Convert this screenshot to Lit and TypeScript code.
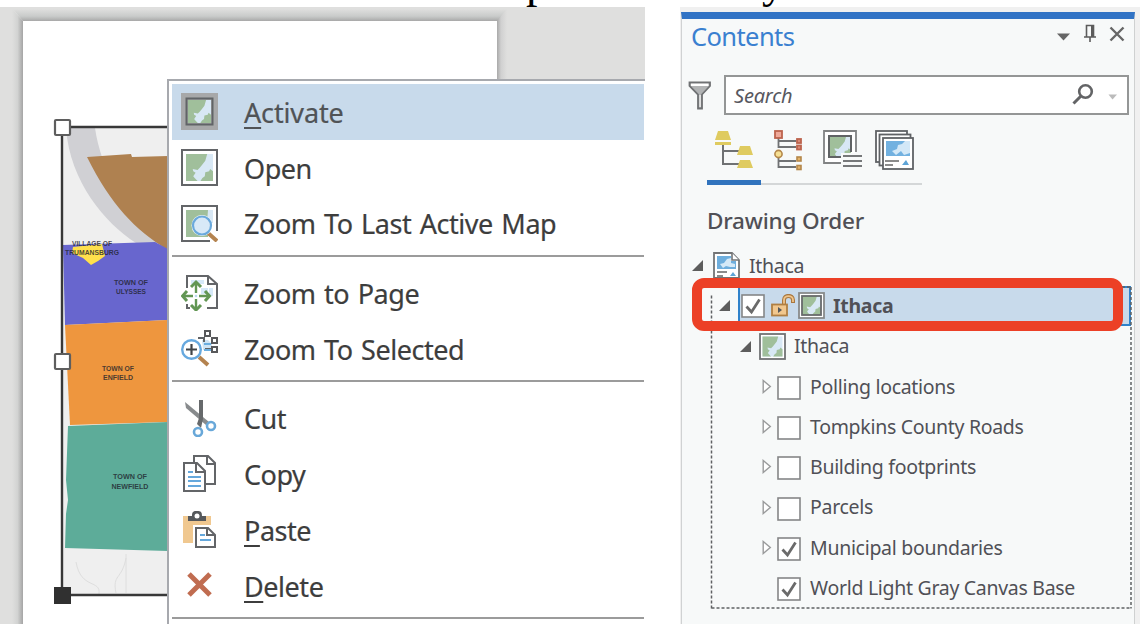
import { LitElement, html, svg, css, nothing } from "lit";
import { customElement } from "lit/decorators.js";

const mapLand = (x: number, y: number, s: number) => svg`
  <g transform="translate(${x} ${y}) scale(${s / 28})">
    <rect width="28" height="28" fill="#d8e8f5"></rect>
    <path d="M0 0H22L20 7L17 11L14.500 14L12 16.500L7 15.500L7.500 18L10 19.500L7.500 23L9 25L12 28H0Z" fill="#a0bf9b"></path>
    <path d="M28 18L25 15.500L24 18L20 19L19.500 23L17 25L15 28H28Z" fill="#a0bf9b"></path>
  </g>`;

const menuIcons: Record<string, unknown> = {
  activate: svg`<rect width="37" height="37" fill="#a7a8a9"></rect><rect x="5.5" y="5.5" width="26" height="26" fill="#a7a8a9" stroke="#616467" stroke-width="2"></rect>${mapLand(7, 7, 23)}`,
  open: svg`<rect x="1" y="1" width="35" height="35" fill="#fff" stroke="#636568" stroke-width="2"></rect>${mapLand(5, 5, 27)}`,
  zoomLast: svg`<path d="M29 36H1V1H36V26" fill="#fff" stroke="#636568" stroke-width="2"></path><rect x="5" y="5" width="22" height="27" fill="#a0bf9b"></rect><path d="M27 5H32V18H26Z" fill="#d8e8f5"></path><path d="M27 28L36 36" stroke="#b4834f" stroke-width="4"></path><circle cx="21" cy="20.5" r="10.500" fill="#fff"></circle><circle cx="21" cy="20.5" r="9" fill="#d8e9f7" stroke="#6aa9dc" stroke-width="2.2"></circle>`,
  zoomPage: svg`<path d="M6 14V2H27L36 10V34H26M9 34H6V30M27 2V10H36" fill="none" stroke="#636568" stroke-width="2"></path><path d="M10 6H23V10H10ZM28 14H32V22H28ZM20 14H27V20H20Z" fill="#d6e9f8"></path><path d="M15 9V35M2 22H29" stroke="#629653" stroke-width="2.4"></path><path d="M10 13L15 8L20 13M10 31L15 36L20 31M6 17L1.500 22L6 27M24 17L28.500 22L24 27" fill="none" stroke="#629653" stroke-width="3"></path><rect x="12" y="19" width="6" height="6" fill="#fff"></rect><circle cx="15" cy="22" r="1.300" fill="#b9d8ef"></circle>`,
  zoomSelected: svg`<path d="M21 10H27L31 14V20H22Z" fill="#cfe4f5"></path><path d="M17 8H23V12M24 19H31" stroke="#616467" stroke-width="2" fill="none"></path><path d="M23 14H30M23 20H31" stroke="#6aaee0" stroke-width="2"></path><g fill="#fff" stroke="#58595b" stroke-width="2"><rect x="24" y="1" width="5" height="5"></rect><rect x="31" y="8" width="5" height="5"></rect><rect x="31" y="17" width="5" height="5"></rect></g><path d="M18 27L27 35" stroke="#b4834f" stroke-width="4"></path><circle cx="10.500" cy="19.500" r="9.300" fill="#fff" stroke="#67a9df" stroke-width="2.400"></circle><path d="M10.500 14V25M5 19.500H16" stroke="#414447" stroke-width="2.200"></path>`,
  cut: svg`<path d="M4 2L5 8L25 25L28 22Z" fill="#888b8d"></path><path d="M18 0H22V19L20 28L16 24L18 18Z" fill="#66696b"></path><circle cx="17" cy="32" r="4" fill="#fff" stroke="#69a8d9" stroke-width="2.600"></circle><circle cx="30" cy="26" r="4" fill="#fff" stroke="#69a8d9" stroke-width="2.600"></circle>`,
  copy: svg`<path d="M13 7V1H27L34 8V29H25M26 1V9H34" fill="#fff" stroke="#636568" stroke-width="2"></path><path d="M3 8H16L24 16V36H3ZM15 8V17H24" fill="#fff" stroke="#636568" stroke-width="2"></path><path d="M7 17H12M7 22H20M7 26H20M7 31H20" stroke="#65a8dc" stroke-width="2"></path>`,
  paste: svg`<path d="M2 5H7V9H25V5H30V14H12V32H2Z" fill="#f0c890"></path><path d="M7 5H11C11 0 13 0 16 0C20 0 21 1 21 5H25V10H7Z" fill="#55585b"></path><circle cx="16" cy="5" r="2.500" fill="#fff"></circle><path d="M15 17H27L34 24V36H15ZM26 17V24H34" fill="#fff" stroke="#636568" stroke-width="2"></path><path d="M19 24H24M19 29H30" stroke="#65a8dc" stroke-width="2"></path>`,
  delete: svg`<path d="M8 7L29 28M29 7L8 28" stroke="#c06c50" stroke-width="5"></path>`,
};

const menu = [
  [["activate", "A", "ctivate"], ["open", "", "Open"], ["zoomLast", "", "Zoom To Last Active Map"]],
  [["zoomPage", "", "Zoom to Page"], ["zoomSelected", "", "Zoom To Selected"]],
  [["cut", "", "Cut"], ["copy", "", "Copy"], ["paste", "P", "aste"], ["delete", "D", "elete"]],
];

const layers = [
  { name: "Polling locations", on: false, group: true },
  { name: "Tompkins County Roads", on: false, group: true },
  { name: "Building footprints", on: false, group: true },
  { name: "Parcels", on: false, group: true },
  { name: "Municipal boundaries", on: true, group: true },
  { name: "World Light Gray Canvas Base", on: true, group: false },
];

const check = (on: boolean) => html`<svg class="check" width="24" height="24" viewBox="0 0 24 24">
  <rect x="1" y="1" width="22" height="22" fill="#fff" stroke="#858687" stroke-width="1.600"></rect>
  ${on ? svg`<path d="M5.500 12.500L10.500 18L18.500 5.500" fill="none" stroke="#6a6a6a" stroke-width="2.800"></path>` : nothing}
</svg>`;

const openArrow = html`<svg width="11" height="11" viewBox="0 0 11 11"><path d="M0 11L11 0V11Z" fill="#5d5d5d"></path></svg>`;
const closedArrow = html`<svg width="10" height="15" viewBox="0 0 10 15"><path d="M1.200 1.500V13.500L8.300 7.500Z" fill="#fff" stroke="#9a9b9c" stroke-width="1.400"></path></svg>`;

@customElement("layout-canvas")
export class LayoutCanvas extends LitElement {
  static styles = css`
    :host { display: block; position: relative; overflow: hidden; background: #dfdfde; }
    .backdrop { display: block; }
    .menu {
      position: absolute; left: 167px; top: 72px; width: 478px; height: 560px; box-sizing: border-box;
      border: 2px solid #a7a9ae; border-right: 0; background: #fff; padding: 3px 1px 0 3px;
      font: 27px/1 "Noto Sans", "Open Sans", sans-serif; color: #3d3d3d; letter-spacing: -0.45px; word-spacing: 1.900px;
    }
    .item { display: flex; align-items: center; height: 55.700px; gap: 26px; padding-left: 9px; white-space: nowrap; }
    .item.hot { background: #c8daeb; color: #505356; letter-spacing: -0.15px; }
    .item svg { flex: none; }
    .label { position: relative; top: 0.700px; -webkit-text-stroke: 0.2px currentColor; }
    .key { text-decoration: underline; text-decoration-thickness: 2px; text-underline-offset: 4px; }
    .group + .group { border-top: 2px solid #9b9b9b; margin-top: 4px; padding-top: 8px; }
    .end { border-top: 2px solid #9b9b9b; margin-top: 4px; }
  `;
  render() {
    return html`
      <svg class="backdrop" width="645" height="617" viewBox="0 7 645 617">
        <defs>
          <linearGradient id="l"><stop offset="0" stop-color="#dfdfde"></stop><stop offset=".5" stop-color="#d2d3d2"></stop><stop offset="1" stop-color="#a5a5a5"></stop></linearGradient>
          <linearGradient id="r"><stop offset="0" stop-color="#a9a9a9"></stop><stop offset=".4" stop-color="#d0d0d0"></stop><stop offset="1" stop-color="#dfdfde"></stop></linearGradient>
          <linearGradient id="t" x2="0" y2="1"><stop offset="0" stop-color="#dfdfde"></stop><stop offset=".6" stop-color="#c9cbca"></stop><stop offset="1" stop-color="#a8a8a8"></stop></linearGradient>
          <clipPath id="frame"><rect x="63" y="128" width="105" height="467"></rect></clipPath>
        </defs>
        <path d="M13 9H507L498 21H23Z" fill="url(#t)"></path>
        <path d="M12 9L23 21V624H12Z" fill="url(#l)"></path>
        <path d="M497 21L507 9V624H497Z" fill="url(#r)"></path>
        <rect x="23" y="21" width="474" height="603" fill="#fff"></rect>
        <g clip-path="url(#frame)">
          <rect x="63" y="128" width="105" height="467" fill="#efefef"></rect>
          <path d="M66 128H95C101 170 126 214 158 243H136C105 223 70 182 66 128Z" fill="#d0d0d4"></path>
          <path d="M87 157L131 154L132 157L168 156V250C135 230 111 205 87 157Z" fill="#af8150"></path>
          <path d="M63 245L155 242L168 249V320L65 325Z" fill="#6866ce"></path>
          <path d="M65 325L167 320V422L70 425Z" fill="#ee963e"></path>
          <path d="M68 426L168 422V551L65 548L66 514L68 500L66 480Z" fill="#5dac99"></path>
          <path d="M73 247L102 244L105 256L98 261L91 265L83 258L72 253Z" fill="#ffe04c"></path>
          <path d="M76 562C81 590 101 579 99 594M126 554V593M126 558C122 580 112 574 116 593" fill="none" stroke="#dedede"></path>
          <g font-family="Liberation Sans" font-size="7" font-weight="700" fill="#20222b" fill-opacity=".8" text-anchor="middle">
            <text x="92" y="246" textLength="40" lengthAdjust="spacingAndGlyphs">VILLAGE OF</text><text x="92" y="255" textLength="54" lengthAdjust="spacingAndGlyphs">TRUMANSBURG</text>
            <text x="131" y="285" textLength="34" lengthAdjust="spacingAndGlyphs">TOWN OF</text><text x="131" y="294" textLength="30" lengthAdjust="spacingAndGlyphs">ULYSSES</text>
            <text x="118" y="371" textLength="32" lengthAdjust="spacingAndGlyphs">TOWN OF</text><text x="118" y="380" textLength="30" lengthAdjust="spacingAndGlyphs">ENFIELD</text>
            <text x="130" y="479" textLength="34" lengthAdjust="spacingAndGlyphs">TOWN OF</text><text x="130" y="489" textLength="37" lengthAdjust="spacingAndGlyphs">NEWFIELD</text>
          </g>
        </g>
        <path d="M168 127H62V595H168" fill="none" stroke="#383838" stroke-width="2.400"></path>
        <g fill="#fff" stroke="#5e5e5e" stroke-width="2.200"><rect x="55" y="120" width="15" height="15" rx="1"></rect><rect x="55" y="354" width="15" height="15" rx="1"></rect></g>
        <rect x="54" y="587" width="17" height="17" fill="#303030"></rect>
      </svg>
      <div class="menu">
        ${menu.map((g) => html`<div class="group">${g.map(([icon, key, text]) => html`
          <div class="item ${icon === "activate" ? "hot" : ""}">
            <svg width="37" height="37" viewBox="0 0 37 37">${menuIcons[icon]}</svg>
            <span class="label"><span class="key">${key}</span>${text}</span>
          </div>`)}</div>`)}
        <div class="end"></div>
      </div>`;
  }
}

@customElement("contents-pane")
export class ContentsPane extends LitElement {
  static styles = css`
    :host { display: block; position: relative; box-sizing: border-box; background: #f0f0f0; padding: 5px 5px 0 1px;
      font: 19.500px/1 "Noto Sans", "Open Sans", sans-serif; color: #505056; }
    .pane { box-sizing: border-box; height: 612px; background: #f7f9f9; border-top: 7px solid #3173c5; border-left: 1px solid #d0d2d3; border-right: 1px solid #cfd1d1; }
    svg { display: block; flex: none; }
    .head { display: flex; align-items: center; height: 37px; padding: 0 5px 1px 9px; }
    .head svg { margin-bottom: 8px; }
    .title { flex: 1; color: #3a80d0; font-size: 25.500px; letter-spacing: -0.6px; padding-bottom: 1px; }
    .find { display: flex; align-items: center; padding: 18px 5px 0 6px; gap: 12px; }
    .box { flex: 1; display: flex; align-items: center; box-sizing: border-box; height: 40px; border: 2px solid #949696; background: #fff; padding: 0 9px 0 8px; }
    .hint { flex: 1; font-style: italic; font-size: 20px; letter-spacing: -0.2px; color: #58585f; padding-top: 1px; }
    .tabs { display: block; margin: 11px 0 0 25px; }
    .order { padding: 20px 0 0 25px; font-size: 22.500px; height: 30px; line-height: 30px; font-weight: 500; letter-spacing: -0.2px; }
    .tree { display: grid; grid-auto-rows: 40.300px; margin-top: 9.300px; }
    .row { display: flex; align-items: center; white-space: nowrap; letter-spacing: -0.3px; }
    .root { padding-left: 10px; gap: 9.500px; }
    .frame { padding-left: 37px; position: relative; }
    .sel { flex: 1; height: 40px; box-sizing: border-box; margin: 0 3px 0 8px; border: 2px solid #2f82cb; background: #c8daeb; display: flex; align-items: center; font-weight: 700; padding-left: 1px; }
    .lock { margin: 0 3px 0 6px; }
    .sel .name { margin-left: 8px; }
    .map { padding-left: 58px; }
    .map .icon { margin: 0 8px; }
    .layer { padding-left: 80px; }
    .arrow { width: 15px; }
    .check { margin-right: 9px; position: relative; top: 1.500px; }
    .sel .check { margin: 0; top: 0; }
    .dots { position: absolute; left: 30px; top: 279px; }
    .mark { position: absolute; left: 12px; top: 271px; width: 431px; height: 53px; box-sizing: border-box; border: 10px solid #ec4026; border-radius: 12px; }
  `;
  render() {
    return html`
      <div class="pane">
        <div class="head">
          <span class="title">Contents</span>
          <svg width="72" height="20" viewBox="0 0 72 20">
            <path d="M0 9.500H13L6.500 16.500Z" fill="#666"></path>
            <path d="M27 13H39M33 13V18M29.500 13V1.500H36.500V13" fill="none" stroke="#5c5c5c" stroke-width="1.600"></path><rect x="34" y="1" width="3" height="12" fill="#5c5c5c"></rect>
            <path d="M53.500 3.500L66.500 16.500M66.500 3.500L53.500 16.500" stroke="#666" stroke-width="2.400"></path>
          </svg>
        </div>
        <div class="find">
          <svg width="24" height="29" viewBox="0 0 24 29"><path d="M1.500 1.500H22V5L14 13.500V27.500H10V13.500L1.500 5Z" fill="#b1b3b4" stroke="#6f7173" stroke-width="1.800"></path><rect x="3" y="2.600" width="17.500" height="2.400" fill="#fff"></rect><rect x="11.400" y="14" width="1.400" height="12" fill="#eee"></rect></svg>
          <div class="box">
            <span class="hint">Search</span>
            <svg width="46" height="24" viewBox="0 0 46 24"><circle cx="13.500" cy="8.500" r="6.300" fill="none" stroke="#636466" stroke-width="2.600"></circle><path d="M9 13L1.500 20.500" stroke="#636466" stroke-width="3"></path><path d="M36.500 11.500H45L40.500 16.500Z" fill="#bbb"></path></svg>
          </div>
        </div>
        <svg class="tabs" width="216" height="60" viewBox="707 126 216 60">
          <path d="M707 184H922" stroke="#c9cbcc" stroke-width="1.600"></path><rect x="707" y="180" width="54" height="5" fill="#3173bd"></rect>
          <path d="M723 145V164H739M723 151H739" fill="none" stroke="#6f7173" stroke-width="2"></path>
          <path d="M718 131H728L731 140H715ZM715 142H731V145H715ZM740 146H750L753 155H737ZM740 160H750L753 168H737Z" fill="#dfcb60"></path>
          <path d="M778.500 138V147H796M778.500 141H796M778.500 158V167H796M778.500 161H796" fill="none" stroke="#707274" stroke-width="1.800"></path>
          <g stroke="#bc634d" fill="#d98a78" stroke-width="1.800"><rect x="775" y="131" width="7" height="7" fill="#efa999"></rect><rect x="797" y="139" width="4" height="4"></rect><rect x="797" y="145.500" width="4" height="4"></rect></g>
          <g stroke="#b4874a" fill="#e3b368" stroke-width="1.600"><circle cx="778.500" cy="154" r="3.600" fill="#f6df93"></circle><rect x="797" y="157" width="4" height="4"></rect><rect x="797" y="165.500" width="4" height="4"></rect></g>
          <path d="M841 163H824V131H856V152" fill="#fff" stroke="#818384" stroke-width="1.800"></path>${mapLand(829, 136, 22)}<path d="M841 157H829V136H851V152" fill="none" stroke="#606365" stroke-width="2"></path>
          <path d="M841 153H863V169H841Z" fill="#f7f9f9"></path><path d="M843 156H862M843 161H862M843 166H862" stroke="#76787a" stroke-width="2"></path>
          <g fill="#fff" stroke="#5f6265" stroke-width="1.800"><rect x="876" y="131" width="31" height="31"></rect><rect x="879.500" y="134.500" width="31" height="31"></rect><rect x="883" y="138" width="30" height="31"></rect></g>
          <rect x="886" y="141" width="24" height="15" fill="#72b1e0"></rect><path d="M892 151L897 149L898 145L902 144L905 141H910V153L904 155L901 151L896 155Z" fill="#d3e8f7"></path>
          <path d="M885 161H899M885 165H893" stroke="#666" stroke-width="1.600"></path><path d="M902 165L906 160L909 165Z" fill="#5da4d7"></path>
        </svg>
        <div class="order">Drawing Order</div>
        <div class="tree">
          <div class="row root">${openArrow}
            <svg width="27" height="27" viewBox="0 0 27 27"><path d="M1 26V1H19L26 8V26Z" fill="#fff" stroke="#727476" stroke-width="1.800"></path><path d="M4 4H18V9H23V17H4Z" fill="#6eaedd"></path><path d="M7 12L11 11L14 7L18 6V11L22 12V15H17L13 14L10 16Z" fill="#d5e9f7"></path><path d="M19 1V8H26" fill="#fff" stroke="#727476" stroke-width="1.600"></path><path d="M4 20H14M4 24H10" stroke="#666" stroke-width="1.600"></path><path d="M17 24L20 20L23 24Z" fill="#5da4d7"></path></svg>
            <span>Ithaca</span></div>
          <div class="row frame">${openArrow}
            <div class="sel">${check(true)}
              <svg class="lock" width="24" height="23" viewBox="0 0 24 23"><path d="M13 11V6C13 .5 22 .5 22 6V9" fill="none" stroke="#a97840" stroke-width="4"></path><path d="M13 11V6C13 .8 22 .8 22 6V8" fill="none" stroke="#efc48a" stroke-width="1.800"></path><rect x="1" y="10.500" width="15" height="11" fill="#f1c78e" stroke="#b07f43" stroke-width="1.800"></rect><path d="M7 13V19L11 16Z" fill="#55585b"></path></svg>
              <svg width="27" height="27" viewBox="0 0 27 27"><rect x="1" y="1" width="25" height="25" fill="#fff" stroke="#888a8b" stroke-width="1.800"></rect>${mapLand(4, 4, 19)}<rect x="4" y="4" width="19" height="19" fill="none" stroke="#686a6c" stroke-width="1.800"></rect></svg>
              <span class="name">Ithaca</span>
            </div></div>
          <div class="row map">${openArrow}
            <svg class="icon" width="27" height="27" viewBox="0 0 27 27"><rect x="1" y="1" width="25" height="25" fill="#fff" stroke="#707274" stroke-width="1.800"></rect>${mapLand(3.5, 3.5, 20)}</svg><span>Ithaca</span></div>
          ${layers.map((l) => html`<div class="row layer"><span class="arrow">${l.group ? closedArrow : nothing}</span>${check(l.on)}<span>${l.name}</span></div>`)}
        </div>
      </div>
      <svg class="dots" width="423" height="324" viewBox="0 0 423 324"><path d="M1.500 322.500V8M421 1V322.500M1.500 322H421M2 1H421" fill="none" stroke="#5f6163" stroke-width="1.500" stroke-dasharray="3 2"></path></svg>
      <div class="mark"></div>`;
  }
}

@customElement("app-root")
export class AppRoot extends LitElement {
  static styles = css`
    :host { display: grid; grid-template: 7px 617px / 645px 460px; column-gap: 35px; width: 1140px; height: 624px; background: #fff; overflow: hidden; }
    .caption { grid-column: 1 / -1; overflow: hidden; display: flex; gap: 213px; padding-left: 526px; font: 46px/20px "Liberation Serif", serif; color: #000; }
    .caption span { margin-top: -28px; }
  `;
  render() {
    return html`<div class="caption"><span>p</span><span>y</span></div><layout-canvas></layout-canvas><contents-pane></contents-pane>`;
  }
}
